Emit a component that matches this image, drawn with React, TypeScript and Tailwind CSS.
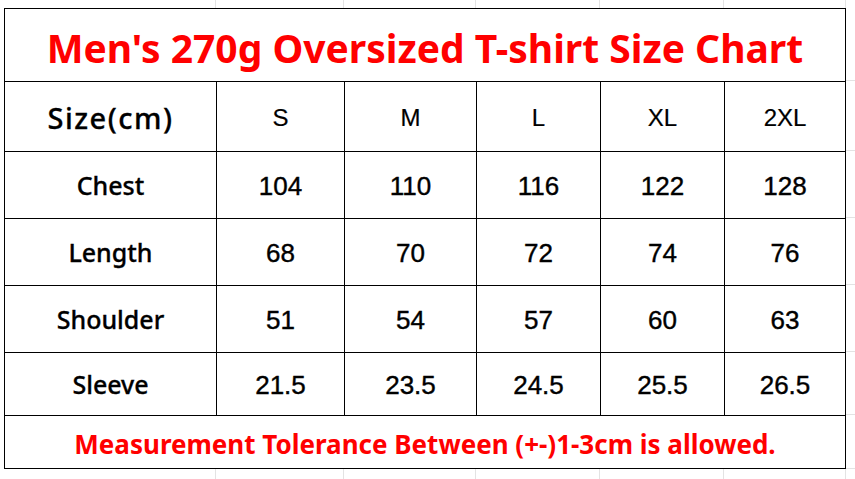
import React from "react";

const sizes = ["S", "M", "L", "XL", "2XL"];

const rows = [
  { label: "Chest", values: ["104", "110", "116", "122", "128"] },
  { label: "Length", values: ["68", "70", "72", "74", "76"] },
  { label: "Shoulder", values: ["51", "54", "57", "60", "63"] },
  { label: "Sleeve", values: ["21.5", "23.5", "24.5", "25.5", "26.5"] },
];

// excel-like faint gridlines around the table
const colWidths = ["w-[212px]", "w-[128px]", "w-[132px]", "w-[124px]", "w-[124px]", "w-[122px]"];
const sideHeights = ["h-[73px]", "h-[70px]", "h-[67px]", "h-[67px]", "h-[67px]", "h-[63px]", "h-[54px]"];

function GridStrip({ className }: { className: string }) {
  return (
    <div className={`flex ${className}`}>
      <div className="w-[4px]" />
      {colWidths.map((w, i) => (
        <div key={i} className={`${w} border-r border-[#e3e3e3]`} />
      ))}
    </div>
  );
}

export default function App() {
  const yahei = "font-['Noto_Sans',sans-serif]";
  const arial = "font-['Liberation_Sans',Arial,sans-serif]";

  return (
    <div className="w-[855px] h-[479px] bg-white flex flex-col overflow-hidden">
      <GridStrip className="h-[8px] shrink-0" />

      <div className="flex shrink-0">
        <div className="w-[4px]" />
        <div className="grid grid-cols-[211px_127px_131px_123px_123px_120px] grid-rows-[72px_69px_66px_66px_66px_62px_52px] gap-px bg-black border border-black w-[842px]">
          <div className={`col-span-6 bg-white flex items-center justify-center pt-[6px] text-[#ff0000] font-bold text-[39px] ${yahei}`}>
            Men's 270g Oversized T-shirt Size Chart
          </div>

          <div className={`bg-white flex items-center justify-center pt-[2px] text-black text-[29px] font-medium tracking-[1.5px] [-webkit-text-stroke:0.3px_black] ${yahei}`}>
            Size(cm)
          </div>
          {sizes.map((s) => (
            <div key={s} className={`bg-white flex items-center justify-center pt-[2px] text-black text-[24px] [-webkit-text-stroke:0.2px_black] ${arial}`}>
              {s}
            </div>
          ))}

          {rows.map((r) => (
            <React.Fragment key={r.label}>
              <div className={`bg-white flex items-center justify-center pt-[2px] text-black text-[25px] font-medium [-webkit-text-stroke:0.3px_black] ${yahei}`}>
                {r.label}
              </div>
              {r.values.map((v, i) => (
                <div key={i} className={`bg-white flex items-center justify-center pt-[3px] text-black text-[26px] [-webkit-text-stroke:0.4px_black] ${arial}`}>
                  {v}
                </div>
              ))}
            </React.Fragment>
          ))}

          <div className={`col-span-6 bg-white flex items-center justify-center pt-[5px] text-[#ff0000] font-bold text-[26px] ${yahei}`}>
            Measurement Tolerance Between (+-)1-3cm is allowed.
          </div>
        </div>
        <div className="flex-1 flex flex-col">
          {sideHeights.map((h, i) => (
            <div key={i} className={`${h} border-b border-[#e3e3e3]`} />
          ))}
        </div>
      </div>

      <GridStrip className="flex-1" />
    </div>
  );
}
